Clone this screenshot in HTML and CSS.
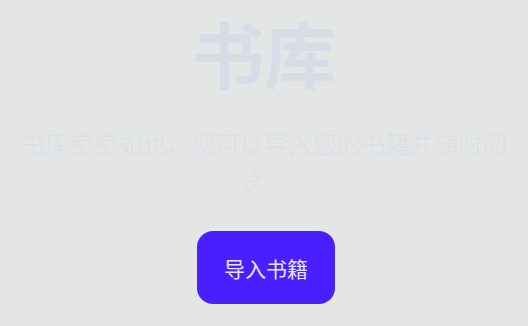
FILE: index.html
```html
<!DOCTYPE html>
<html lang="zh">
<head>
<meta charset="utf-8">
<link rel="stylesheet" href="styles.css">
</head>
<body>
<main class="empty">
  <h1 class="title">书库</h1>
  <p class="desc">书库空空如也，您可以导入您的书籍并随时阅读。</p>
  <button class="import">导入书籍</button>
</main>
</body>
</html>
```
FILE: styles.css
```css
html, body {
  margin: 0;
  height: 100%;
  background: #e4e6e5;
}
body {
  font-family: "Noto Sans CJK SC", "Noto Sans", sans-serif;
}
.empty {
  display: flex;
  flex-direction: column;
  align-items: center;
  padding: 0 16px;
  box-sizing: border-box;
  width: 528px;
}
.title {
  margin: 0;
  font-size: 72px;
  font-weight: 700;
  line-height: 104px;
  color: #d6dde6;
}
.desc {
  margin: 20px 0 0;
  font-size: 24.3px;
  font-weight: 300;
  line-height: 37px;
  text-align: center;
  color: #d9dfe7;
}
.import {
  margin-top: 33px;
  margin-left: 4px;
  width: 138px;
  height: 73px;
  border: none;
  border-radius: 16px;
  background: #4a1fff;
  color: #e4e6ff;
  font-family: "Noto Sans CJK SC", "Noto Sans", sans-serif;
  font-size: 21px;
  padding: 0;
}
```
